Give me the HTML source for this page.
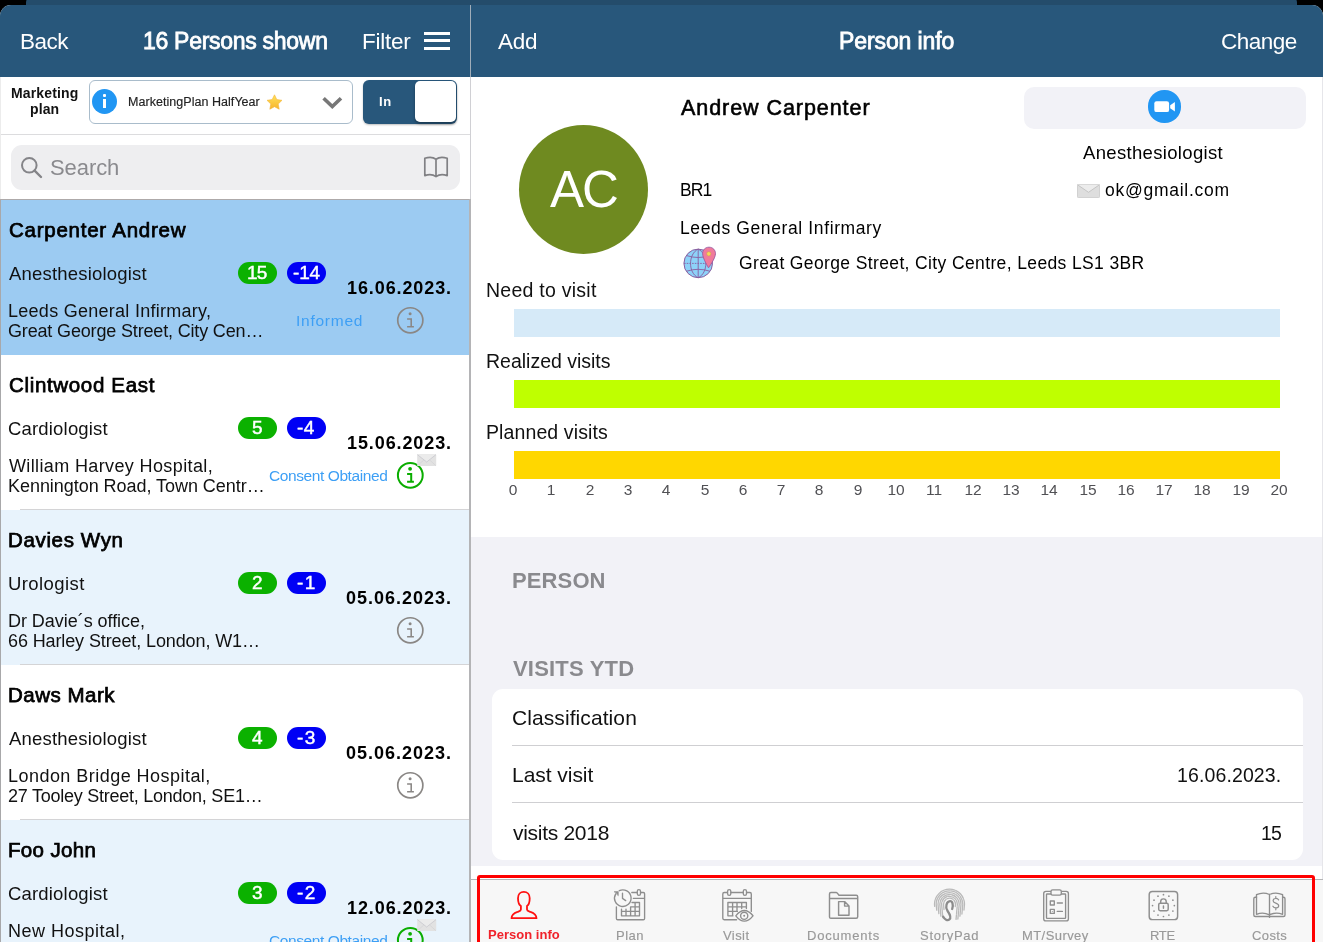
<!DOCTYPE html>
<html lang="en"><head><meta charset="utf-8"><title>Person info</title>
<style>
html,body{margin:0;padding:0}
body{width:1323px;height:942px;overflow:hidden;background:#000;position:relative;font-family:"Liberation Sans",sans-serif}
.a{position:absolute}
.t{position:absolute;white-space:pre;line-height:1;font-family:"Liberation Sans",sans-serif}
#behind{left:26px;top:-6px;width:1271px;height:30px;background:#244c6b;border-radius:9px 9px 0 0}
#sheet{left:0;top:5px;width:1323px;height:937px;background:#fff;border-radius:11px 11px 0 0;overflow:hidden}
#pg{left:0;top:-5px;width:1323px;height:942px}
#pg{will-change:transform}
.hdr{top:5px;height:72px;background:#28577b}
.row{left:0;width:470px;height:155px}
.sep{left:20px;width:450px;height:1px;background:#d4d4d6}
.bg{border-radius:11px;height:22px;width:39px}
.bar{left:513.5px;width:766px;height:28px}
</style></head><body>
<div id="behind" class="a"></div>
<div id="sheet" class="a"><div id="pg" class="a">

<!-- left pane -->
<div class="a hdr" style="left:0;width:470px"></div>
<div class="a hdr" style="left:471px;width:852px"></div>
<div class="a" style="left:470px;top:5px;width:1px;height:72px;background:#a0adb9"></div>
<div class="a" style="left:470px;top:77px;width:1px;height:122px;background:#d0d0d4"></div>
<div class="a" style="left:469.4px;top:199px;width:1.6px;height:743px;background:#b4b4b6;z-index:2"></div>
<!-- hamburger -->
<div class="a" style="left:424px;top:32px;width:26px;height:2.8px;background:#fff"></div>
<div class="a" style="left:424px;top:39.2px;width:26px;height:2.8px;background:#fff"></div>
<div class="a" style="left:424px;top:46.9px;width:26px;height:2.8px;background:#fff"></div>

<!-- marketing plan row -->
<div class="a" style="left:89px;top:80px;width:262px;height:42px;border:1px solid #a9bccb;border-radius:6px;background:#fff"></div>
<div class="a" style="left:92px;top:88.7px;width:25.4px;height:25.4px;border-radius:50%;background:#2196f3"></div>
<div class="a" style="left:103.4px;top:94.3px;width:2.8px;height:2.9px;background:#fff;border-radius:1px"></div>
<div class="a" style="left:103.4px;top:98.7px;width:2.8px;height:9.2px;background:#fff"></div>
<svg class="a" style="left:265.5px;top:93.5px" width="17" height="16" viewBox="0 0 17 16"><defs><linearGradient id="sg" x1="0" y1="0" x2="0" y2="1"><stop offset="0" stop-color="#ffe45c"/><stop offset="1" stop-color="#f7b32b"/></linearGradient></defs><path d="M8.5 0.8 L10.8 5.6 L16 6.3 L12.2 10 L13.2 15.2 L8.5 12.7 L3.8 15.2 L4.8 10 L1 6.3 L6.2 5.6 Z" fill="url(#sg)" stroke="#f3b63a" stroke-width="0.6" stroke-linejoin="round"/></svg>
<svg class="a" style="left:321px;top:95px" width="23" height="16" viewBox="0 0 23 16"><path d="M2.6 3.2 L11.3 11.6 L20 3.2" fill="none" stroke="#777" stroke-width="3.6"/></svg>
<div class="a" style="left:363px;top:79.6px;width:94px;height:44px;border-radius:6px;background:#28577b;box-shadow:0 1px 2px rgba(0,0,0,.25)"></div>
<div class="a" style="left:414.7px;top:81px;width:41.3px;height:41.2px;border-radius:5px;background:#fff;box-shadow:0 2px 3px rgba(0,0,0,.35)"></div>
<div class="a" style="left:0;top:134px;width:470px;height:1px;background:#dcdcde"></div>
<!-- search -->
<div class="a" style="left:10.5px;top:144.5px;width:449.5px;height:45.5px;border-radius:11px;background:#eeeef0"></div>
<svg class="a" style="left:19px;top:155px" width="25" height="25" viewBox="0 0 25 25"><circle cx="10.3" cy="10.3" r="7.3" fill="none" stroke="#848488" stroke-width="2"/><path d="M15.6 15.6 L22 22" stroke="#848488" stroke-width="2.4" stroke-linecap="round"/></svg>
<svg class="a" style="left:422px;top:155px" width="28" height="24" viewBox="0 0 28 24"><path d="M14 4.2 C11.5 2.3 6.5 2 2.8 3.2 V20.6 C6.5 19.4 11.5 19.8 14 21.6 C16.5 19.8 21.5 19.4 25.2 20.6 V3.2 C21.5 2 16.5 2.3 14 4.2 Z M14 4.2 V21.6" fill="none" stroke="#808084" stroke-width="1.7" stroke-linejoin="round"/></svg>

<!-- list -->
<div class="a" style="left:0;top:199px;width:470px;height:1.5px;background:#aeaaaa"></div>
<div class="a" style="left:0;top:77px;width:1px;height:122px;background:#ececec"></div>
<div class="a row" style="top:200px;background:#9ccbf2"></div>
<div class="a row" style="top:355px;background:#fff"></div>
<div class="a row" style="top:510px;background:#e8f3fc"></div>
<div class="a row" style="top:665px;background:#fff"></div>
<div class="a row" style="top:820px;background:#e8f3fc"></div>
<div class="a sep" style="top:509px"></div>
<div class="a sep" style="top:664px"></div>
<div class="a sep" style="top:819px"></div>
<div class="a" style="left:0;top:200px;width:1px;height:742px;background:#a8a8aa"></div>
<div class="a bg" style="left:237.6px;top:262.1px;background:#0bb100"></div>
<div class="a bg" style="left:286.8px;top:262.1px;background:#0000f5"></div>
<svg class="a" style="left:395px;top:305px" width="31" height="31" viewBox="0 0 31 31"><circle cx="15.30" cy="15.30" r="12.55" fill="none" stroke="#8a8785" stroke-width="1.7"/><circle cx="15.10" cy="8.80" r="1.5" fill="#8a8785"/><path d="M12.10 14.00 H16.20 V21.70 M12.10 21.70 H18.90" fill="none" stroke="#8a8785" stroke-width="1.55"/></svg>
<div class="a bg" style="left:237.6px;top:417.1px;background:#0bb100"></div>
<div class="a bg" style="left:286.8px;top:417.1px;background:#0000f5"></div>
<svg class="a" style="left:395px;top:460px" width="31" height="31" viewBox="0 0 31 31"><circle cx="15.30" cy="15.30" r="12.40" fill="none" stroke="#0aad00" stroke-width="2.0"/><circle cx="15.10" cy="8.80" r="1.9" fill="#0aad00"/><path d="M12.10 14.00 H16.20 V21.70 M12.10 21.70 H18.90" fill="none" stroke="#0aad00" stroke-width="2.0"/></svg>
<svg class="a" style="left:416.8px;top:454.0px" width="20" height="13" viewBox="0 0 20 13"><rect x="0.2" y="0.2" width="19" height="11.8" rx="0.8" fill="#e2e2e2"/><path d="M0.4 0.6 L9.7 8 L19 0.6" fill="#ebebeb" stroke="#c4c4cc" stroke-width="0.7"/><path d="M0.4 11.8 L7 5.8 M19 11.8 L12.4 5.8" stroke="#d0d0d4" stroke-width="0.6"/></svg>
<div class="a bg" style="left:237.6px;top:572.1px;background:#0bb100"></div>
<div class="a bg" style="left:286.8px;top:572.1px;background:#0000f5"></div>
<svg class="a" style="left:395px;top:615px" width="31" height="31" viewBox="0 0 31 31"><circle cx="15.30" cy="15.30" r="12.55" fill="none" stroke="#8a8785" stroke-width="1.7"/><circle cx="15.10" cy="8.80" r="1.5" fill="#8a8785"/><path d="M12.10 14.00 H16.20 V21.70 M12.10 21.70 H18.90" fill="none" stroke="#8a8785" stroke-width="1.55"/></svg>
<div class="a bg" style="left:237.6px;top:727.1px;background:#0bb100"></div>
<div class="a bg" style="left:286.8px;top:727.1px;background:#0000f5"></div>
<svg class="a" style="left:395px;top:770px" width="31" height="31" viewBox="0 0 31 31"><circle cx="15.30" cy="15.30" r="12.55" fill="none" stroke="#8a8785" stroke-width="1.7"/><circle cx="15.10" cy="8.80" r="1.5" fill="#8a8785"/><path d="M12.10 14.00 H16.20 V21.70 M12.10 21.70 H18.90" fill="none" stroke="#8a8785" stroke-width="1.55"/></svg>
<div class="a bg" style="left:237.6px;top:882.1px;background:#0bb100"></div>
<div class="a bg" style="left:286.8px;top:882.1px;background:#0000f5"></div>
<svg class="a" style="left:395px;top:925px" width="31" height="31" viewBox="0 0 31 31"><circle cx="15.30" cy="15.30" r="12.40" fill="none" stroke="#0aad00" stroke-width="2.0"/><circle cx="15.10" cy="8.80" r="1.9" fill="#0aad00"/><path d="M12.10 14.00 H16.20 V21.70 M12.10 21.70 H18.90" fill="none" stroke="#0aad00" stroke-width="2.0"/></svg>
<svg class="a" style="left:416.8px;top:919.0px" width="20" height="13" viewBox="0 0 20 13"><rect x="0.2" y="0.2" width="19" height="11.8" rx="0.8" fill="#e2e2e2"/><path d="M0.4 0.6 L9.7 8 L19 0.6" fill="#ebebeb" stroke="#c4c4cc" stroke-width="0.7"/><path d="M0.4 11.8 L7 5.8 M19 11.8 L12.4 5.8" stroke="#d0d0d4" stroke-width="0.6"/></svg>

<!-- right pane -->
<div class="a" style="left:518.7px;top:125px;width:129px;height:129px;border-radius:50%;background:#6f8a20"></div>
<div class="a" style="left:1023.7px;top:87px;width:282px;height:41.5px;border-radius:10px;background:#f2f2f7"></div>
<div class="a" style="left:1148.4px;top:90.4px;width:32.2px;height:32.2px;border-radius:50%;background:#2196f3"></div>
<svg class="a" style="left:1152px;top:99px" width="26" height="16" viewBox="0 0 26 16"><rect x="2.3" y="2.3" width="14.8" height="10.8" rx="2.2" fill="#fff"/><path d="M18.2 6.2 L22.9 3 V12.4 L18.2 9.2 Z" fill="#fff"/></svg>
<!-- envelope emoji -->
<svg class="a" style="left:1076.5px;top:184px" width="23" height="14" viewBox="0 0 23 14"><rect x="0.4" y="0.4" width="22.2" height="13.2" rx="1" fill="#dedede" stroke="#c6c6c6" stroke-width="0.8"/><path d="M0.6 0.8 L11.5 8.3 L22.4 0.8" fill="#ececec" stroke="#bdbdbd" stroke-width="0.8"/></svg>
<!-- globe + pin -->
<svg class="a" style="left:675px;top:240px" width="50" height="45" viewBox="675 240 50 45" fill="none">
<circle cx="698.2" cy="263.4" r="14.3" fill="#8dd2f8" stroke="#8a5c9e" stroke-width="1"/>
<path d="M698.2 249.1 V277.7 M698.2 249.1 C688 254 688 273 698.2 277.7 M698.2 249.1 C708.4 254 708.4 273 698.2 277.7 M686.6 255.6 Q698.2 259.4 709.8 255.6 M686.6 271.2 Q698.2 267.4 709.8 271.2" stroke="#8a5c9e" stroke-width="0.9"/>
<path d="M684 263.4 H712.4" stroke="#8a5c9e" stroke-width="0.9" stroke-dasharray="1.6 1.1"/>
<path d="M709 247.2 C704.9 247.2 702.6 250.4 702.6 253.6 C702.6 258.4 708.5 267.8 708.5 267.8 C708.5 267.8 715.5 258.4 715.5 253.6 C715.5 250.4 713.1 247.2 709 247.2 Z" fill="#f17a9b" stroke="#9a5aa0" stroke-width="0.9"/>
<circle cx="708.8" cy="253.8" r="2.1" fill="#f6d65a" stroke="#c9a24a" stroke-width="0.5"/>
</svg>
<div class="a bar" style="top:309px;background:#d6eaf8"></div>
<div class="a bar" style="top:380px;background:#bfff00"></div>
<div class="a bar" style="top:451px;background:#ffd700"></div>

<div class="a" style="left:471px;top:537px;width:852px;height:329px;background:#f2f2f7"></div>
<div class="a" style="left:491.5px;top:688.6px;width:811px;height:171px;border-radius:11px;background:#fff"></div>
<div class="a" style="left:512px;top:745px;width:790.5px;height:1px;background:#cfcfd2"></div>
<div class="a" style="left:512px;top:802px;width:790.5px;height:1px;background:#cfcfd2"></div>
<div class="a" style="left:1322px;top:77px;width:1px;height:802px;background:#e6e6ea"></div>

<!-- tab bar -->
<div class="a" style="left:471px;top:879px;width:852px;height:63px;background:#f7f7f7"></div>
<div class="a" style="left:471px;top:879px;width:852px;height:1px;background:#b4b4b6"></div>
<div class="a" style="left:477.3px;top:875.2px;width:1831.6px;height:80px;border:3.2px solid #ff0000;border-radius:3px;box-sizing:border-box;width:837.8px"></div>
<svg class="a" style="left:471px;top:880px" width="852" height="62" viewBox="471 880 852 62" fill="none" stroke-linecap="round" stroke-linejoin="round">
<path d="M523.8 891.9 C520.3 891.9 518 894.6 518 898.2 C518 901.8 518.6 904.4 520.9 906 L520.9 909.5 C520.9 911 519 911.3 517.5 911.9 C514 913.2 511.6 915 511.5 918.2 L536.5 918.2 C536.4 915 534 913.2 530.5 911.9 C529 911.3 527 911 527 909.5 L527 906 C529.2 904.4 529.7 901.8 529.7 898.2 C529.7 894.6 527.3 891.9 523.8 891.9 Z" stroke="#ff1010" stroke-width="1.8"/>
<g stroke="#8e8e8e" stroke-width="1.35">
<path d="M616.4 907 V918.4 Q616.4 919.7 617.7 919.7 H643.3 Q644.6 919.7 644.6 918.4 V893.8 Q644.6 892.5 643.3 892.5 H640.8 M637 892.5 H631.8 M633.4 898.4 H644.6"/>
<rect x="637.3" y="889.6" width="3.2" height="5.8" rx="1.6"/>
<path d="M619.29 890.68 A8.3 8.3 0 1 1 615.61 894.05"/>
<path d="M614.4 891.6 H618.3 V895.4 Z" fill="#8e8e8e" stroke-width="0.6"/>
<path d="M622.5 893.2 V898.4 L625.7 900.6"/>
<path d="M632 902.5 H639.5 V915.8 H621.5 V909.2 M630.6 906.8 H639.5 M621.5 911.4 H639.5 M626 909.2 V915.8 M630.6 906.8 V915.8 M635.1 902.5 V915.8"/>
</g>
<g stroke="#8e8e8e" stroke-width="1.35">
<path d="M736.6 919.7 H724.2 Q722.8 919.7 722.8 918.3 V893.9 Q722.8 892.5 724.2 892.5 H727.4 M731 892.5 H743.1 M746.7 892.5 H749.9 Q751.3 892.5 751.3 893.9 V911.4 M722.8 898.4 H751.3"/>
<rect x="727.6" y="889.6" width="3.2" height="5.8" rx="1.6"/><rect x="743.3" y="889.6" width="3.2" height="5.8" rx="1.6"/>
<path d="M727.9 902.5 H746.4 V908.6 M727.9 902.5 V915.8 H733 M727.9 906.9 H746.4 M727.9 911.4 H737.4 M732.6 902.5 V915.8 M737 902.5 V911.4 M741.7 902.5 V908.6"/>
<path d="M735.8 915.8 Q744.3 905.2 753 915.8 Q744.3 926.6 735.8 915.8 Z" fill="#f7f7f7"/>
<circle cx="744.2" cy="915.8" r="3.6"/><circle cx="744.2" cy="915.8" r="1" fill="#8e8e8e" stroke="none"/>
</g>
<g stroke="#8e8e8e" stroke-width="1.45">
<path d="M829.5 917 V893.9 Q829.5 892.5 830.9 892.5 H836 Q836.8 892.5 837.3 893.1 L839 895.2 H856.2 Q857.7 895.2 857.7 896.7 V916.8 Q857.7 918.3 856.2 918.3 H830.9 Q829.5 918.3 829.5 917 Z M829.5 898.4 H857.7"/>
<path d="M838.6 901.6 H844.6 L849 906.1 V915.2 H838.6 Z M844.6 901.6 V906.1 H849"/>
</g>
<g stroke="#bababa" stroke-width="1.3">
<path d="M943.98 909.50 L943.50 904.20 A6.0 6.0 0 0 1 955.50 904.20 L955.29 906.50" stroke-dasharray="11 1.2 6 1.2"/>
<path d="M942.81 917.60 L941.60 904.20 A7.9 7.9 0 0 1 957.40 904.20 L956.03 919.40" stroke-dasharray="15 1.2 7 1.2"/>
<path d="M940.88 916.20 L939.80 904.20 A9.7 9.7 0 0 1 959.20 904.20 L957.87 919.00" stroke-dasharray="19 1.2 8 1.2"/>
<path d="M938.85 913.60 L938.00 904.20 A11.5 11.5 0 0 1 961.00 904.20 L959.85 917.00" stroke-dasharray="23 1.2 9 1.2"/>
<path d="M936.74 910.20 L936.20 904.20 A13.3 13.3 0 0 1 962.80 904.20 L961.92 914.00" stroke-dasharray="27 1.2 10 1.2"/>
<path d="M934.70 906.40 L934.50 904.20 A15.0 15.0 0 0 1 964.50 904.20 L963.98 910.00" stroke-dasharray="31 1.2 11 1.2"/>
</g>
<path d="M952.2 909 C953.6 904.6 952.4 901 950 901.2 C946.6 901.5 944.8 907 947.6 911 C950.2 914.8 951.6 917.6 949.4 919.4 C947.4 921 944.6 919.4 943.2 916.8" stroke="#8c8c8c" stroke-width="2.3"/>
<g stroke="#8e8e8e" stroke-width="1.35">
<rect x="1043.7" y="891.4" width="24.7" height="29.5" rx="2.2"/>
<rect x="1046.5" y="894" width="19.1" height="24.4" rx="0.6"/>
<rect x="1051" y="889.9" width="10.3" height="5.2" rx="1.6" fill="#f7f7f7"/>
<rect x="1050.3" y="901" width="4" height="4"/><rect x="1050.3" y="909.4" width="4" height="4"/>
<path d="M1057.3 903 H1062.4 M1057.3 911.4 H1062.4"/><circle cx="1052.3" cy="911.4" r="0.5" fill="#8e8e8e" stroke="none"/>
</g>
<g stroke="#8e8e8e" stroke-width="1.45">
<rect x="1149.2" y="891.4" width="28.4" height="28.2" rx="3.2"/>
<rect x="1158.7" y="903.3" width="9.5" height="7.4" rx="1.4"/>
<path d="M1160.7 903.3 V901.6 A2.75 2.75 0 0 1 1166.2 901.6 V903.3 M1163.45 906 V908.3"/>
</g>
<circle cx="1174.35" cy="905.60" r="0.85" fill="#8e8e8e"/>
<circle cx="1172.89" cy="911.05" r="0.85" fill="#8e8e8e"/>
<circle cx="1168.90" cy="915.04" r="0.85" fill="#8e8e8e"/>
<circle cx="1163.45" cy="916.50" r="0.85" fill="#8e8e8e"/>
<circle cx="1158.00" cy="915.04" r="0.85" fill="#8e8e8e"/>
<circle cx="1154.01" cy="911.05" r="0.85" fill="#8e8e8e"/>
<circle cx="1152.55" cy="905.60" r="0.85" fill="#8e8e8e"/>
<circle cx="1154.01" cy="900.15" r="0.85" fill="#8e8e8e"/>
<circle cx="1158.00" cy="896.16" r="0.85" fill="#8e8e8e"/>
<circle cx="1163.45" cy="894.70" r="0.85" fill="#8e8e8e"/>
<circle cx="1168.90" cy="896.16" r="0.85" fill="#8e8e8e"/>
<circle cx="1172.89" cy="900.15" r="0.85" fill="#8e8e8e"/>
<g stroke="#8e8e8e" stroke-width="1.35">
<path d="M1256.5 897.2 H1255.3 Q1253.8 897.2 1253.8 898.7 V915 Q1253.8 916.5 1255.3 916.5 H1283.5 Q1285 916.5 1285 915 V898.7 Q1285 897.2 1283.5 897.2 H1282.6"/>
<path d="M1256.5 914.3 V894.7 Q1263 891.6 1269.5 894.5 Q1276 891.6 1282.6 894.7 V914.3 Q1276 911.6 1269.5 914.8 Q1263 911.6 1256.5 914.3 Z M1269.5 894.5 V917.4"/>
<path d="M1278.6 899.9 C1277.4 897.8 1273.2 898 1273.1 900.7 C1273 903.6 1278.8 902.6 1278.7 905.8 C1278.6 908.6 1274 908.6 1272.9 906.2 M1275.8 896.6 V898.3 M1275.8 908 V909.8" stroke-width="1.2"/>
</g>
</svg>

<div class="t" style="font-size:22.5px;font-weight:400;color:#fff;letter-spacing:-0.533px;left:20.00px;top:31.00px;">Back</div>
<div class="t" style="font-size:23px;font-weight:400;color:#fff;letter-spacing:-0.287px;-webkit-text-stroke:0.8px #fff;left:143.00px;top:30.00px;">16 Persons shown</div>
<div class="t" style="font-size:22.5px;font-weight:400;color:#fff;letter-spacing:-0.240px;left:362.00px;top:31.00px;">Filter</div>
<div class="t" style="font-size:22.5px;font-weight:400;color:#fff;letter-spacing:-0.300px;left:498.00px;top:31.00px;">Add</div>
<div class="t" style="font-size:23px;font-weight:400;color:#fff;letter-spacing:-0.100px;-webkit-text-stroke:0.8px #fff;left:839.00px;top:30.00px;">Person info</div>
<div class="t" style="font-size:22.5px;font-weight:400;color:#fff;letter-spacing:-0.500px;left:1221.00px;top:31.00px;">Change</div>
<div class="t" style="font-size:14.0px;font-weight:700;color:#111;letter-spacing:0.138px;left:11.00px;top:86.00px;">Marketing</div>
<div class="t" style="font-size:14.0px;font-weight:700;color:#111;letter-spacing:0.100px;left:30.00px;top:102.00px;">plan</div>
<div class="t" style="font-size:12.5px;font-weight:400;color:#222;letter-spacing:0.043px;-webkit-text-stroke:0.15px #222;left:128.00px;top:96.00px;">MarketingPlan HalfYear</div>
<div class="t" style="font-size:13.0px;font-weight:700;color:#fff;letter-spacing:0.700px;left:379.00px;top:95.00px;">In</div>
<div class="t" style="font-size:22.0px;font-weight:400;color:#8a8a8e;letter-spacing:-0.080px;left:50.00px;top:157.00px;">Search</div>
<div class="t" style="font-size:20.5px;font-weight:400;color:#000;letter-spacing:0.753px;-webkit-text-stroke:0.75px #000;left:9.00px;top:220.00px;">Carpenter Andrew</div>
<div class="t" style="font-size:18.5px;font-weight:400;color:#111;letter-spacing:0.187px;left:9.00px;top:265.00px;">Anesthesiologist</div>
<div class="t" style="font-size:18.0px;font-weight:400;color:#111;letter-spacing:0.274px;left:8.00px;top:302.00px;">Leeds General Infirmary,</div>
<div class="t" style="font-size:18.0px;font-weight:400;color:#111;letter-spacing:-0.162px;left:8.00px;top:322.00px;">Great George Street, City Cen…</div>
<div class="t" style="font-size:19.0px;font-weight:400;color:#fff;letter-spacing:-0.900px;-webkit-text-stroke:0.45px #fff;left:247.00px;top:263.00px;">15</div>
<div class="t" style="font-size:19.0px;font-weight:400;color:#fff;letter-spacing:-0.200px;-webkit-text-stroke:0.45px #fff;left:293.00px;top:263.00px;">-14</div>
<div class="t" style="font-size:18px;font-weight:700;color:#000;letter-spacing:0.900px;left:347.00px;top:279.00px;">16.06.2023.</div>
<div class="t" style="font-size:15.5px;font-weight:400;color:#3d9ff5;letter-spacing:0.743px;left:296.00px;top:313.00px;">Informed</div>
<div class="t" style="font-size:20.5px;font-weight:400;color:#000;letter-spacing:0.662px;-webkit-text-stroke:0.75px #000;left:9.00px;top:375.00px;">Clintwood East</div>
<div class="t" style="font-size:18.5px;font-weight:400;color:#111;letter-spacing:0.182px;left:8.00px;top:420.00px;">Cardiologist</div>
<div class="t" style="font-size:18.0px;font-weight:400;color:#111;letter-spacing:0.374px;left:9.00px;top:457.00px;">William Harvey Hospital,</div>
<div class="t" style="font-size:18.0px;font-weight:400;color:#111;letter-spacing:-0.044px;left:8.00px;top:477.00px;">Kennington Road, Town Centr…</div>
<div class="t" style="font-size:19.0px;font-weight:400;color:#fff;letter-spacing:0.000px;-webkit-text-stroke:0.45px #fff;left:252.00px;top:418.00px;">5</div>
<div class="t" style="font-size:19.0px;font-weight:400;color:#fff;letter-spacing:0.400px;-webkit-text-stroke:0.45px #fff;left:297.00px;top:418.00px;">-4</div>
<div class="t" style="font-size:18px;font-weight:700;color:#000;letter-spacing:0.900px;left:347.00px;top:434.00px;">15.06.2023.</div>
<div class="t" style="font-size:15.5px;font-weight:400;color:#3d9ff5;letter-spacing:-0.413px;left:269.00px;top:468.00px;">Consent Obtained</div>
<div class="t" style="font-size:20.5px;font-weight:400;color:#000;letter-spacing:0.644px;-webkit-text-stroke:0.75px #000;left:8.00px;top:530.00px;">Davies Wyn</div>
<div class="t" style="font-size:18.5px;font-weight:400;color:#111;letter-spacing:0.412px;left:8.00px;top:575.00px;">Urologist</div>
<div class="t" style="font-size:18.0px;font-weight:400;color:#111;letter-spacing:-0.041px;left:8.00px;top:612.00px;">Dr Davie´s office,</div>
<div class="t" style="font-size:18.0px;font-weight:400;color:#111;letter-spacing:-0.114px;left:8.00px;top:632.00px;">66 Harley Street, London, W1…</div>
<div class="t" style="font-size:19.0px;font-weight:400;color:#fff;letter-spacing:0.000px;-webkit-text-stroke:0.45px #fff;left:252.00px;top:573.00px;">2</div>
<div class="t" style="font-size:19.0px;font-weight:400;color:#fff;letter-spacing:1.400px;-webkit-text-stroke:0.45px #fff;left:297.00px;top:573.00px;">-1</div>
<div class="t" style="font-size:18px;font-weight:700;color:#000;letter-spacing:0.980px;left:346.00px;top:589.00px;">05.06.2023.</div>
<div class="t" style="font-size:20.5px;font-weight:400;color:#000;letter-spacing:0.500px;-webkit-text-stroke:0.75px #000;left:8.00px;top:685.00px;">Daws Mark</div>
<div class="t" style="font-size:18.5px;font-weight:400;color:#111;letter-spacing:0.187px;left:9.00px;top:730.00px;">Anesthesiologist</div>
<div class="t" style="font-size:18.0px;font-weight:400;color:#111;letter-spacing:0.464px;left:8.00px;top:767.00px;">London Bridge Hospital,</div>
<div class="t" style="font-size:18.0px;font-weight:400;color:#111;letter-spacing:-0.248px;left:8.00px;top:787.00px;">27 Tooley Street, London, SE1…</div>
<div class="t" style="font-size:19.0px;font-weight:400;color:#fff;letter-spacing:0.000px;-webkit-text-stroke:0.45px #fff;left:252.00px;top:728.00px;">4</div>
<div class="t" style="font-size:19.0px;font-weight:400;color:#fff;letter-spacing:1.400px;-webkit-text-stroke:0.45px #fff;left:297.00px;top:728.00px;">-3</div>
<div class="t" style="font-size:18px;font-weight:700;color:#000;letter-spacing:0.980px;left:346.00px;top:744.00px;">05.06.2023.</div>
<div class="t" style="font-size:20.5px;font-weight:400;color:#000;letter-spacing:0.343px;-webkit-text-stroke:0.75px #000;left:8.00px;top:840.00px;">Foo John</div>
<div class="t" style="font-size:18.5px;font-weight:400;color:#111;letter-spacing:0.182px;left:8.00px;top:885.00px;">Cardiologist</div>
<div class="t" style="font-size:18.0px;font-weight:400;color:#111;letter-spacing:0.500px;left:8.00px;top:922.00px;">New Hospital,</div>
<div class="t" style="font-size:19.0px;font-weight:400;color:#fff;letter-spacing:0.000px;-webkit-text-stroke:0.45px #fff;left:252.00px;top:883.00px;">3</div>
<div class="t" style="font-size:19.0px;font-weight:400;color:#fff;letter-spacing:1.400px;-webkit-text-stroke:0.45px #fff;left:297.00px;top:883.00px;">-2</div>
<div class="t" style="font-size:18px;font-weight:700;color:#000;letter-spacing:0.900px;left:347.00px;top:899.00px;">12.06.2023.</div>
<div class="t" style="font-size:15.5px;font-weight:400;color:#3d9ff5;letter-spacing:-0.413px;left:269.00px;top:933.00px;">Consent Obtained</div>
<div class="t" style="font-size:51.0px;font-weight:400;color:#fff;letter-spacing:-1.900px;left:550.00px;top:164.00px;">AC</div>
<div class="t" style="font-size:21.5px;font-weight:400;color:#000;letter-spacing:0.940px;-webkit-text-stroke:0.6px #000;left:681.00px;top:98.00px;">Andrew Carpenter</div>
<div class="t" style="font-size:17.5px;font-weight:400;color:#000;letter-spacing:-0.950px;left:680.00px;top:182.00px;">BR1</div>
<div class="t" style="font-size:17.5px;font-weight:400;color:#000;letter-spacing:0.618px;left:680.00px;top:220.00px;">Leeds General Infirmary</div>
<div class="t" style="font-size:17.5px;font-weight:400;color:#000;letter-spacing:0.372px;left:739.00px;top:255.00px;">Great George Street, City Centre, Leeds LS1 3BR</div>
<div class="t" style="font-size:18.5px;font-weight:400;color:#000;letter-spacing:0.333px;left:1083.00px;top:144.00px;">Anesthesiologist</div>
<div class="t" style="font-size:17.5px;font-weight:400;color:#000;letter-spacing:0.727px;left:1105.00px;top:182.00px;">ok@gmail.com</div>
<div class="t" style="font-size:19.5px;font-weight:400;color:#111;letter-spacing:0.250px;left:486.00px;top:281.00px;">Need to visit</div>
<div class="t" style="font-size:19.5px;font-weight:400;color:#111;letter-spacing:-0.007px;left:486.00px;top:352.00px;">Realized visits</div>
<div class="t" style="font-size:19.5px;font-weight:400;color:#111;letter-spacing:0.108px;left:486.00px;top:423.00px;">Planned visits</div>
<div class="t" style="font-size:15.5px;font-weight:400;color:#505054;letter-spacing:0.000px;left:473.00px;top:482.00px;width:80px;text-align:center;">0</div>
<div class="t" style="font-size:15.5px;font-weight:400;color:#505054;letter-spacing:0.000px;left:511.00px;top:482.00px;width:80px;text-align:center;">1</div>
<div class="t" style="font-size:15.5px;font-weight:400;color:#505054;letter-spacing:0.000px;left:550.00px;top:482.00px;width:80px;text-align:center;">2</div>
<div class="t" style="font-size:15.5px;font-weight:400;color:#505054;letter-spacing:0.000px;left:588.00px;top:482.00px;width:80px;text-align:center;">3</div>
<div class="t" style="font-size:15.5px;font-weight:400;color:#505054;letter-spacing:0.000px;left:626.00px;top:482.00px;width:80px;text-align:center;">4</div>
<div class="t" style="font-size:15.5px;font-weight:400;color:#505054;letter-spacing:0.000px;left:665.00px;top:482.00px;width:80px;text-align:center;">5</div>
<div class="t" style="font-size:15.5px;font-weight:400;color:#505054;letter-spacing:0.000px;left:703.00px;top:482.00px;width:80px;text-align:center;">6</div>
<div class="t" style="font-size:15.5px;font-weight:400;color:#505054;letter-spacing:0.000px;left:741.00px;top:482.00px;width:80px;text-align:center;">7</div>
<div class="t" style="font-size:15.5px;font-weight:400;color:#505054;letter-spacing:0.000px;left:779.00px;top:482.00px;width:80px;text-align:center;">8</div>
<div class="t" style="font-size:15.5px;font-weight:400;color:#505054;letter-spacing:0.000px;left:818.00px;top:482.00px;width:80px;text-align:center;">9</div>
<div class="t" style="font-size:15.5px;font-weight:400;color:#505054;letter-spacing:0.000px;left:856.00px;top:482.00px;width:80px;text-align:center;">10</div>
<div class="t" style="font-size:15.5px;font-weight:400;color:#505054;letter-spacing:0.000px;left:894.00px;top:482.00px;width:80px;text-align:center;">11</div>
<div class="t" style="font-size:15.5px;font-weight:400;color:#505054;letter-spacing:0.000px;left:933.00px;top:482.00px;width:80px;text-align:center;">12</div>
<div class="t" style="font-size:15.5px;font-weight:400;color:#505054;letter-spacing:0.000px;left:971.00px;top:482.00px;width:80px;text-align:center;">13</div>
<div class="t" style="font-size:15.5px;font-weight:400;color:#505054;letter-spacing:0.000px;left:1009.00px;top:482.00px;width:80px;text-align:center;">14</div>
<div class="t" style="font-size:15.5px;font-weight:400;color:#505054;letter-spacing:0.000px;left:1048.00px;top:482.00px;width:80px;text-align:center;">15</div>
<div class="t" style="font-size:15.5px;font-weight:400;color:#505054;letter-spacing:0.000px;left:1086.00px;top:482.00px;width:80px;text-align:center;">16</div>
<div class="t" style="font-size:15.5px;font-weight:400;color:#505054;letter-spacing:0.000px;left:1124.00px;top:482.00px;width:80px;text-align:center;">17</div>
<div class="t" style="font-size:15.5px;font-weight:400;color:#505054;letter-spacing:0.000px;left:1162.00px;top:482.00px;width:80px;text-align:center;">18</div>
<div class="t" style="font-size:15.5px;font-weight:400;color:#505054;letter-spacing:0.000px;left:1201.00px;top:482.00px;width:80px;text-align:center;">19</div>
<div class="t" style="font-size:15.5px;font-weight:400;color:#505054;letter-spacing:0.000px;left:1239.00px;top:482.00px;width:80px;text-align:center;">20</div>
<div class="t" style="font-size:22.0px;font-weight:700;color:#8a8a8e;letter-spacing:0.120px;left:512.00px;top:570.00px;">PERSON</div>
<div class="t" style="font-size:22.0px;font-weight:700;color:#8a8a8e;letter-spacing:0.189px;left:513.00px;top:658.00px;">VISITS YTD</div>
<div class="t" style="font-size:21.0px;font-weight:400;color:#111;letter-spacing:0.085px;left:512.00px;top:707.00px;">Classification</div>
<div class="t" style="font-size:21.0px;font-weight:400;color:#111;letter-spacing:-0.044px;left:512.00px;top:764.00px;">Last visit</div>
<div class="t" style="font-size:19.5px;font-weight:400;color:#111;letter-spacing:0.120px;left:1177.00px;top:766.00px;">16.06.2023.</div>
<div class="t" style="font-size:21.0px;font-weight:400;color:#111;letter-spacing:-0.290px;left:513.00px;top:822.00px;">visits 2018</div>
<div class="t" style="font-size:19.5px;font-weight:400;color:#111;letter-spacing:-0.800px;left:1261.00px;top:824.00px;">15</div>
<div class="t" style="font-size:13.0px;font-weight:700;color:#f0222a;letter-spacing:0.020px;left:488.00px;top:928.00px;">Person info</div>
<div class="t" style="font-size:13.0px;font-weight:400;color:#999999;letter-spacing:0.467px;-webkit-text-stroke:0.15px #999999;left:616.00px;top:929.00px;">Plan</div>
<div class="t" style="font-size:13.0px;font-weight:400;color:#999999;letter-spacing:0.425px;-webkit-text-stroke:0.15px #999999;left:723.00px;top:929.00px;">Visit</div>
<div class="t" style="font-size:13.0px;font-weight:400;color:#999999;letter-spacing:0.800px;-webkit-text-stroke:0.15px #999999;left:807.00px;top:929.00px;">Documents</div>
<div class="t" style="font-size:13.0px;font-weight:400;color:#999999;letter-spacing:0.714px;-webkit-text-stroke:0.15px #999999;left:920.00px;top:929.00px;">StoryPad</div>
<div class="t" style="font-size:13.0px;font-weight:400;color:#999999;letter-spacing:0.425px;-webkit-text-stroke:0.15px #999999;left:1022.00px;top:929.00px;">MT/Survey</div>
<div class="t" style="font-size:13.0px;font-weight:400;color:#999999;letter-spacing:-0.300px;-webkit-text-stroke:0.15px #999999;left:1150.00px;top:929.00px;">RTE</div>
<div class="t" style="font-size:13.0px;font-weight:400;color:#999999;letter-spacing:0.400px;-webkit-text-stroke:0.15px #999999;left:1252.00px;top:929.00px;">Costs</div>
</div></div>
</body></html>
